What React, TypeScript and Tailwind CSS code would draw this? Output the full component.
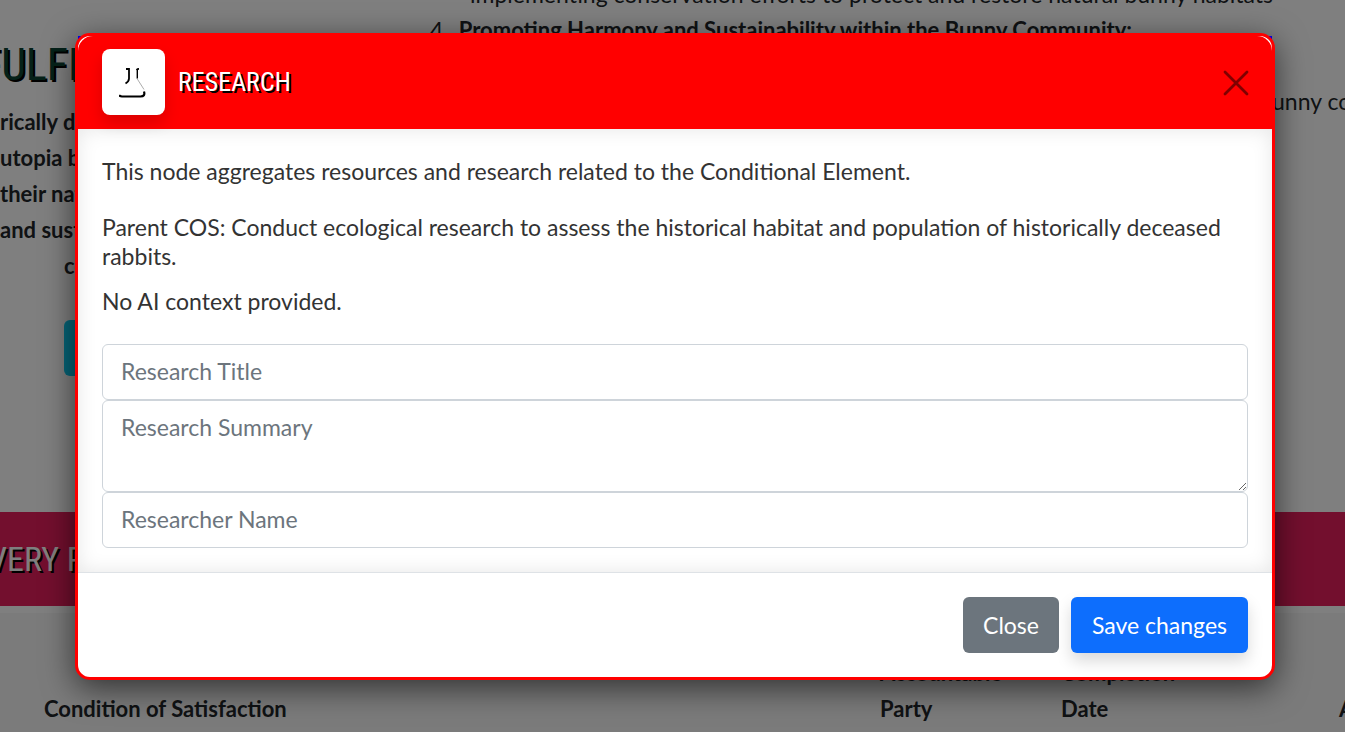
import React from "react";

function FlaskIcon() {
  return (
    <svg viewBox="0 0 30 32" className="h-8 w-[30px]" fill="none" stroke="#000" aria-hidden="true">
      <path d="M7 3h3v9.500q0 3-3.500 5" strokeWidth="1.800" />
      <path d="M18.300 3v9.500" strokeWidth="1.400" />
      <path d="M17.500 3.800q1-1 2.500-1" strokeWidth="1.800" />
      <path d="M18 12.500l7 11" stroke="#888" strokeWidth="0.700" />
      <path d="M0 29.300q1 1.200 3 1.200h18.500q5 0 3.500-5" strokeWidth="2.200" />
    </svg>
  );
}

function Background() {
  return (
    <div className="h-screen overflow-hidden bg-white text-[23px] text-[#212529]" aria-hidden="true">
      <div className="flex h-[512px] overflow-hidden whitespace-nowrap">
        <div className="w-[400px] shrink-0 pt-9 text-[22px] font-bold leading-9">
          <h2 className="-ml-5 h-[68px] font-['Roboto_Condensed','Roboto',sans-serif] text-[44px] font-normal leading-[58px] text-[#0b4233] [text-shadow:2px_2px_#000]">
            FULFILL
          </h2>
          <p>rically deceased</p>
          <p>utopia by</p>
          <p>their natural</p>
          <p>and sustain</p>
          <p className="pl-16">community</p>
          <button type="button" className="ml-16 mt-9 h-14 w-40 rounded-md bg-[#0dcaf0]" tabIndex={-1} />
        </div>
        <div className="-mt-6 pl-[30px] leading-9">
          <p className="pl-10">implementing conservation efforts to protect and restore natural bunny habitats</p>
          <p className="flex gap-2.5">
            <span>4.</span>
            <b className="text-[22px]">Promoting Harmony and Sustainability within the Bunny Community:</b>
          </p>
          <p className="pl-[842px] pt-[35px]">unny community</p>
        </div>
      </div>
      <div className="h-[94px] bg-[#e61e5c] font-['Roboto_Condensed','Roboto',sans-serif] text-[34px] leading-[94px] text-white [text-shadow:2px_2px_#000]">
        <p className="-ml-3">VERY PLAN</p>
      </div>
      <div className="mt-[7px] h-[119px] bg-[#f6f6f6]">
        <table className="w-[1500px] table-fixed text-left text-[22px] leading-9">
          <thead>
            <tr className="align-bottom">
              <th className="w-[880px] pl-11">Condition of Satisfaction</th>
              <th className="w-[181px] pt-[42px]">Accountable<br />Party</th>
              <th className="w-[278px]">Completion<br />Date</th>
              <th>Action</th>
            </tr>
          </thead>
        </table>
      </div>
    </div>
  );
}

const fieldClass =
  "block w-full rounded-md border border-[#ced4da] bg-white px-[18px] text-[23px] leading-9 text-[#212529] placeholder:text-[#6c757d]";

export default function App() {
  return (
    <div className="relative h-screen overflow-hidden font-['Lato',sans-serif]">
      <Background />
      <div className="absolute inset-0 flex items-start justify-center bg-black/50 pl-[5px] pt-[33px]">
        <div className="relative w-full max-w-[1200px]">
          <div className="absolute inset-x-[3px] top-[3px] h-10 bg-[#0000ff]" />
          <div
            role="dialog"
            aria-labelledby="dialog-title"
            className="relative rounded-[15px] border-[3px] border-[#ff0000] bg-white shadow-[0_8px_32px_rgba(0,0,0,0.6)]"
          >
            <header className="flex items-center justify-between rounded-t-[15px] bg-[#ff0000] px-6 pb-3.5 pt-[13px]">
              <div className="flex items-center gap-[13px]">
                <span className="flex h-[66px] w-[63px] items-center justify-center rounded-lg bg-white shadow-[0_8px_16px_rgba(0,0,0,0.15)]">
                  <FlaskIcon />
                </span>
                <h1
                  id="dialog-title"
                  className="font-['Roboto_Condensed','Roboto',sans-serif] text-[26px] leading-9 text-white [text-shadow:2px_2px_#000]"
                >
                  RESEARCH
                </h1>
              </div>
              <button type="button" aria-label="Close dialog" className="text-[#800000]">
                <svg viewBox="0 0 24 24" className="size-6 overflow-visible" fill="none" stroke="currentColor" strokeWidth="2.800" strokeLinecap="round">
                  <path d="M1 2l22 22M23 2L1 24" />
                </svg>
              </button>
            </header>
            <div className="px-6 pb-6 pt-7 text-[23px] leading-[29px] text-[#333] shadow-[inset_0_0_20px_rgba(0,0,0,0.1)]">
              <p>This node aggregates resources and research related to the Conditional Element.</p>
              <p className="mt-[27px]">
                Parent COS: Conduct ecological research to assess the historical habitat and population of historically
                deceased rabbits.
              </p>
              <p className="mb-7 mt-4">No AI context provided.</p>
              <input type="text" aria-label="Research Title" placeholder="Research Title" className={`${fieldClass} h-14 pb-0.5`} />
              <textarea
                aria-label="Research Summary"
                placeholder="Research Summary"
                className={`${fieldClass} h-[92px] resize-y py-2`}
              />
              <input type="text" aria-label="Researcher Name" placeholder="Researcher Name" className={`${fieldClass} h-14 pb-0.5`} />
            </div>
            <footer className="flex justify-end gap-3 border-t border-[#dee2e6] p-6 text-[23px] text-white">
              <button type="button" className="h-14 rounded-md bg-[#6c757d] px-5">Close</button>
              <button type="button" className="h-14 rounded-md bg-[#0d6efd] px-[21px] shadow-[0_8px_16px_rgba(0,0,0,0.15)]">
                Save changes
              </button>
            </footer>
          </div>
        </div>
      </div>
    </div>
  );
}
